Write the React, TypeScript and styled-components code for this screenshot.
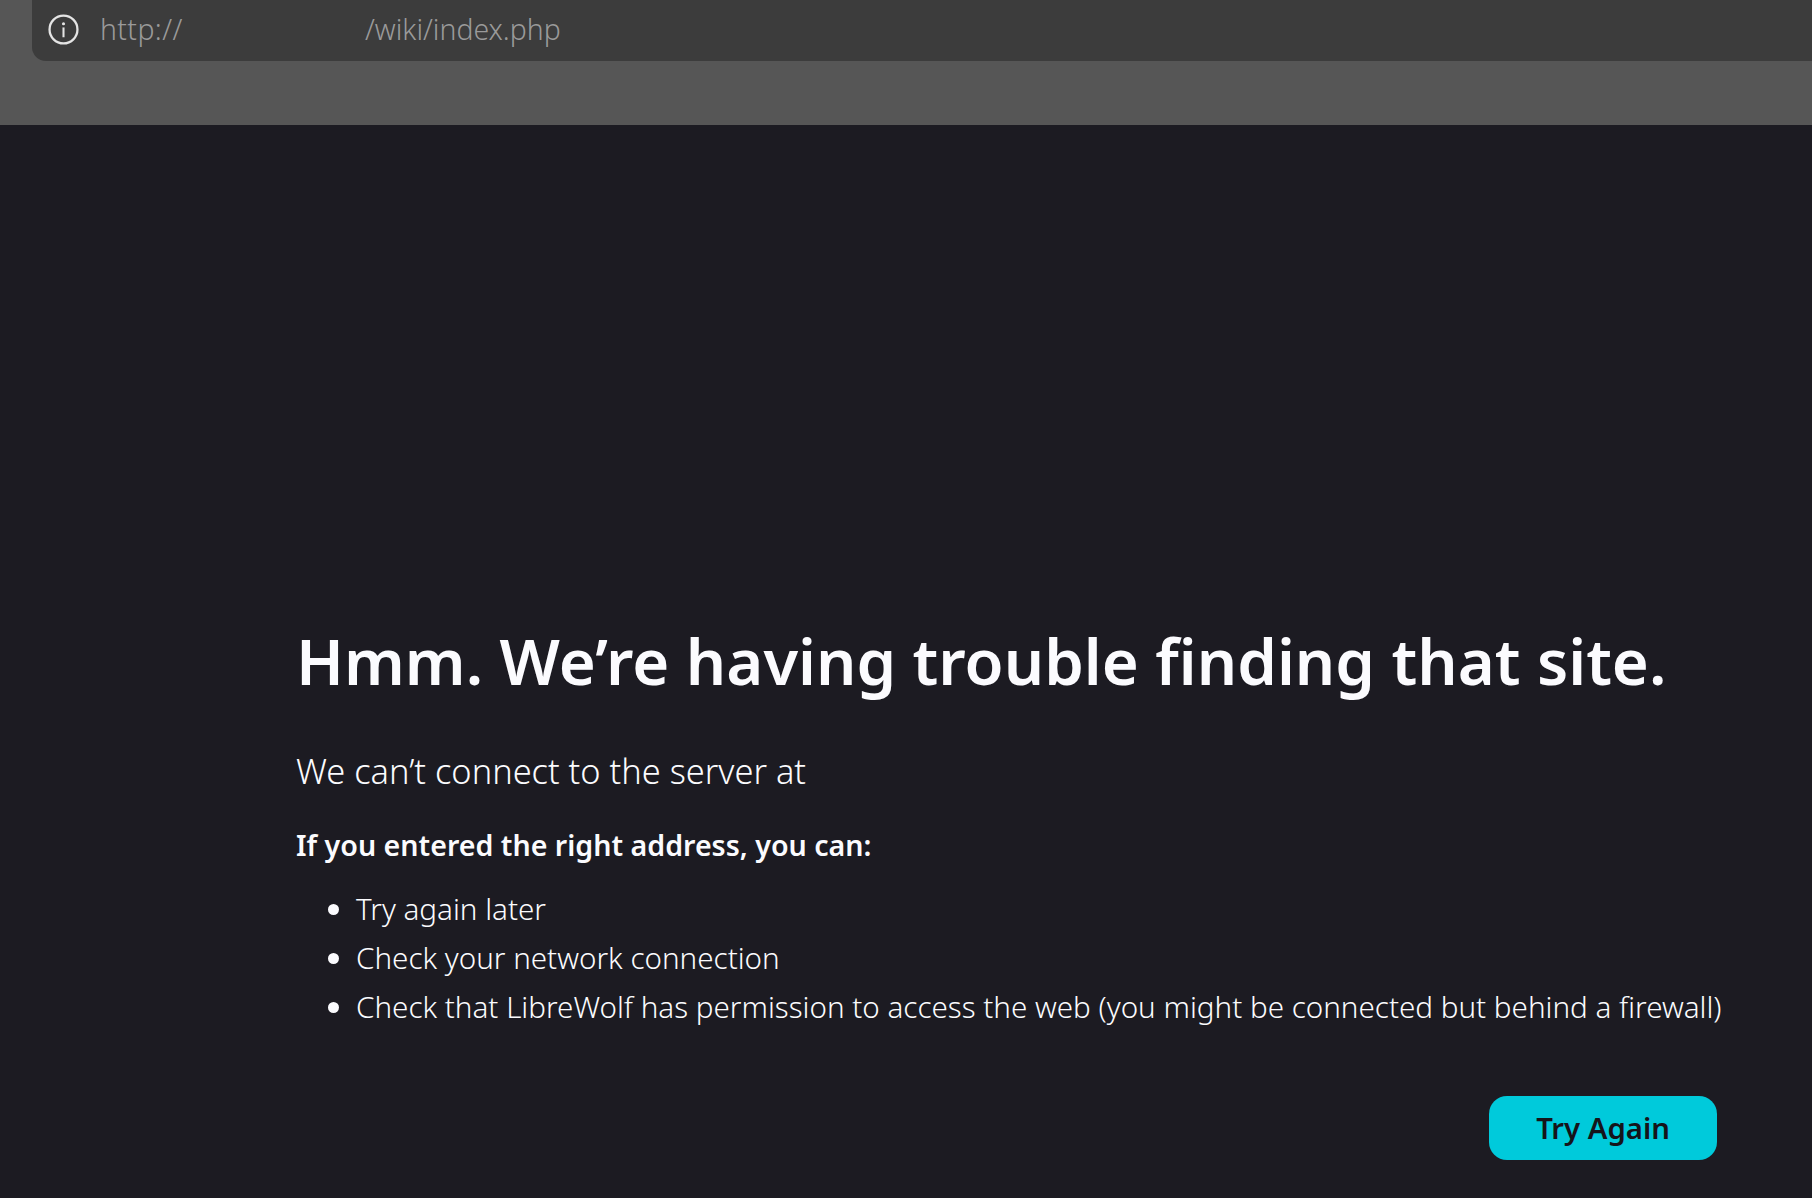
import { createGlobalStyle, styled } from 'styled-components';

const GlobalStyle = createGlobalStyle`
  html, body {
    margin: 0;
    height: 100%;
    background: #1c1b22;
  }
  body {
    font-family: 'Noto Sans', 'Open Sans', sans-serif;
    overflow: hidden;
  }
`;

const Page = styled.div`
  display: flex;
  flex-direction: column;
  height: 1198px;
`;

const Toolbar = styled.header`
  flex: 0 0 125px;
  box-sizing: border-box;
  background: #565656;
  padding-left: 32px;
`;

const UrlBar = styled.div`
  display: flex;
  align-items: center;
  height: 61px;
  padding: 0 0 3px 16px;
  box-sizing: border-box;
  background: #3c3c3c;
  border-bottom-left-radius: 14px;
`;

const InfoIcon = styled.svg`
  flex: 0 0 31px;
  width: 31px;
  height: 31px;
  margin-right: 21px;
`;

const Url = styled.div`
  display: flex;
  font-size: 28.4px;
  font-weight: 300;
  color: #9a9a9a;
  white-space: nowrap;
`;

const UrlHost = styled.span`
  width: 265px;
  letter-spacing: 0.4px;
`;

const Main = styled.main`
  flex: 1;
  padding: 496px 0 0 296px;
  width: 1421px;
  color: #fbfbfe;
`;

const Title = styled.h1`
  margin: 0;
  font-size: 63.4px;
  line-height: 80px;
  font-weight: 600;
  white-space: nowrap;
`;

const Lead = styled.p`
  margin: 48px 0 0;
  font-size: 34.4px;
  line-height: 44px;
  font-weight: 300;
  white-space: nowrap;
`;

const Hint = styled.p`
  margin: 30px 0 0;
  font-size: 28.6px;
  line-height: 44px;
  font-weight: 600;
  white-space: nowrap;
`;

const Tips = styled.ul`
  margin: 17px 0 0;
  padding: 0 0 0 60px;
`;

const Tip = styled.li`
  font-size: 29.6px;
  line-height: 49px;
  font-weight: 300;
  white-space: nowrap;
`;

const Actions = styled.div`
  display: flex;
  justify-content: flex-end;
  margin-top: 65px;
`;

const RetryButton = styled.button`
  width: 228px;
  height: 64px;
  padding: 0;
  border: 0;
  border-radius: 18px;
  background: #00cadb;
  color: #15141a;
  font-family: inherit;
  font-size: 29.3px;
  font-weight: 600;
`;

export default function App() {
  return (
    <>
      <GlobalStyle />
      <Page>
        <Toolbar>
          <UrlBar>
            <InfoIcon viewBox="0 0 30 30" fill="none">
              <circle cx="15" cy="15" r="13.5" stroke="#e4e4e4" strokeWidth="2.2" />
              <circle cx="15" cy="9.5" r="1.5" fill="#e4e4e4" />
              <rect x="14" y="13" width="2" height="9.5" fill="#e4e4e4" />
            </InfoIcon>
            <Url>
              <UrlHost>http://</UrlHost>
              <span>/wiki/index.php</span>
            </Url>
          </UrlBar>
        </Toolbar>
        <Main>
          <Title>Hmm. We’re having trouble finding that site.</Title>
          <Lead>We can’t connect to the server at</Lead>
          <Hint>If you entered the right address, you can:</Hint>
          <Tips>
            <Tip>Try again later</Tip>
            <Tip>Check your network connection</Tip>
            <Tip>Check that LibreWolf has permission to access the web (you might be connected but behind a firewall)</Tip>
          </Tips>
          <Actions>
            <RetryButton>Try Again</RetryButton>
          </Actions>
        </Main>
      </Page>
    </>
  );
}
